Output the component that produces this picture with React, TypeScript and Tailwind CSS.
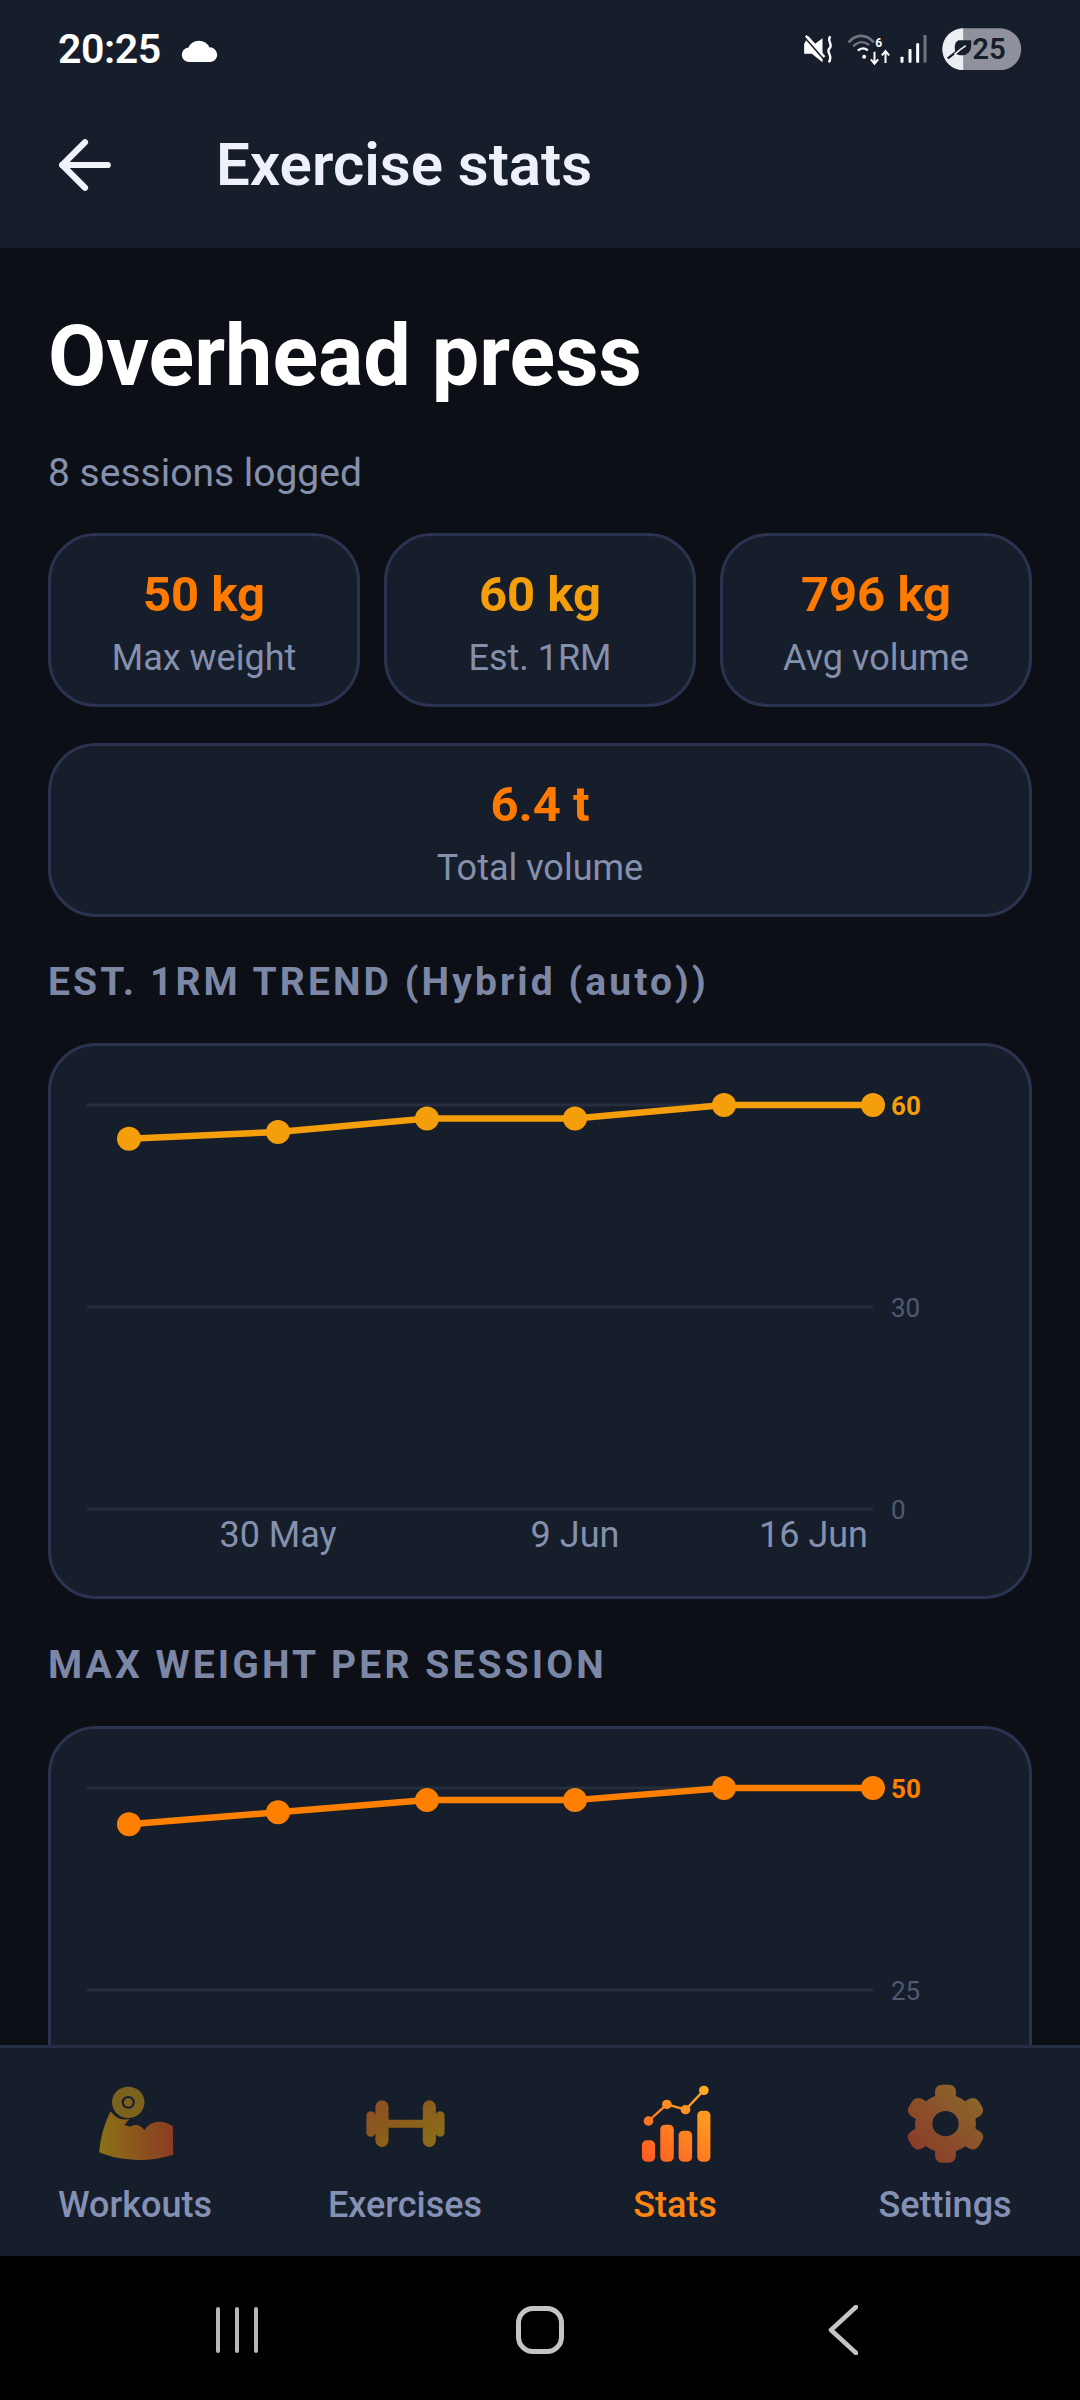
import { ArrowLeft } from "lucide-react";

const font = "font-['Roboto',sans-serif]";

const summary = [
	{ value: "50 kg", label: "Max weight", color: "text-[#ff7a00]" },
	{ value: "60 kg", label: "Est. 1RM", color: "text-[#f59e0b]" },
	{ value: "796 kg", label: "Avg volume", color: "text-[#ff7a00]" },
];

const pointsX = [81, 230, 379, 527, 676, 825];

type ChartProps = {
	color: string;
	max: number;
	values: number[];
	ticks: string[];
};

// plot area runs from y=62 (max) to y=466 (zero)
function TrendChart({ color, max, values, ticks }: ChartProps) {
	const toY = (v: number) => 466 - (v / max) * 404;
	const line = values.map((v, i) => `${pointsX[i]},${toY(v)}`).join(" ");

	return (
		<div className="h-[556px] rounded-[48px] border-[3px] border-[#2b3350] bg-[#171e2b] shrink-0">
			<svg viewBox="3 3 978 550" className="w-full h-full">
				{[62, 264, 466].map((y) => (
					<line key={y} x1="39" x2="825" y1={y} y2={y} stroke="#252d3e" strokeWidth="3" />
				))}
				<polyline points={line} fill="none" stroke={color} strokeWidth="6.5" />
				{values.map((v, i) => (
					<circle key={i} cx={pointsX[i]} cy={toY(v)} r="12" fill={color} />
				))}
				<text x="843" y="72" fontSize="26" fontWeight="700" fill={color} fontFamily="Roboto, sans-serif">
					{ticks[0]}
				</text>
				<text x="843" y="274" fontSize="26" fill="#4f5a73" fontFamily="Roboto, sans-serif">
					{ticks[1]}
				</text>
				<text x="843" y="476" fontSize="26" fill="#4f5a73" fontFamily="Roboto, sans-serif">
					{ticks[2]}
				</text>
				<text x="230" y="504" fontSize="36" textAnchor="middle" fill="#8590ad" fontFamily="Roboto, sans-serif">
					30 May
				</text>
				<text x="527" y="504" fontSize="36" textAnchor="middle" fill="#8590ad" fontFamily="Roboto, sans-serif">
					9 Jun
				</text>
				<text x="820" y="504" fontSize="36" textAnchor="end" fill="#8590ad" fontFamily="Roboto, sans-serif">
					16 Jun
				</text>
			</svg>
		</div>
	);
}

function StatusIcons() {
	return (
		<svg viewBox="120 50 680 150" className="w-[227px] h-[50px]" fill="none">
			{/* muted speaker + vibrate wave */}
			<path d="M135 106 L135 136 L158 136 L190 162 L190 90 L168 106 L148 84 Z" fill="#fff" />
			<path d="M134 84 L192 150" stroke="#171e2b" strokeWidth="5" />
			<path d="M140 82 L196 146" stroke="#fff" strokeWidth="7" />
			<path d="M214 84 C200 98 224 106 211 120 C198 132 224 140 209 162" stroke="#fff" strokeWidth="7" />
			{/* wifi */}
			<path d="M268 102 C290 76 322 76 344 102" stroke="#6f7480" strokeWidth="8" />
			<path d="M282 114 C298 98 314 98 330 110" stroke="#6f7480" strokeWidth="7" />
			<path d="M296 127 C306 118 316 118 326 126" stroke="#fff" strokeWidth="7" />
			<circle cx="315" cy="145" r="6" fill="#fff" />
			<text x="348" y="115" fontSize="36" fontWeight="700" fill="#fff" fontFamily="Roboto, sans-serif">
				6
			</text>
			<path d="M346 130 V164 M335 153 L346 166 L357 153 M379 164 V130 M368 141 L379 128 L390 141" stroke="#fff" strokeWidth="6" />
			{/* signal bars, the tallest one dimmed */}
			<rect x="424" y="145" width="9" height="18" rx="2" fill="#fff" />
			<rect x="448" y="122" width="9" height="41" rx="2" fill="#fff" />
			<rect x="471" y="105" width="9" height="58" rx="2" fill="#fff" />
			<rect x="493" y="80" width="9" height="83" rx="2" fill="#6f7480" />
			{/* battery pill with saver leaf */}
			<rect x="550" y="60" width="236" height="125" rx="62" fill="#8f929c" />
			<path d="M612 60 V185 A62 62 0 0 1 612 60 Z" fill="#eceef2" />
			<path d="M598 96 H636 V112 C636 136 612 148 590 136 C584 118 586 102 598 96 Z" fill="#171e2b" />
			<path d="M566 150 C584 136 600 124 618 110" stroke="#171e2b" strokeWidth="7" />
			<path d="M586 138 C598 128 608 120 620 112" stroke="#eceef2" strokeWidth="5" />
			<text x="639" y="152" fontSize="88" fontWeight="600" fill="#171e2b" fontFamily="Roboto, sans-serif">
				25
			</text>
		</svg>
	);
}

function WorkoutsIcon() {
	return (
		<svg viewBox="270 160 240 240" preserveAspectRatio="none" className="w-[83px] h-[80px] opacity-50">
			<defs>
				<linearGradient id="arm" x1="0" x2="1" y1="0" y2="0">
					<stop offset="0" stopColor="#ffc400" />
					<stop offset="1" stopColor="#ff5a1f" />
				</linearGradient>
			</defs>
			<circle cx="369" cy="218" r="47" fill="#e0a514" />
			<circle cx="369" cy="218" r="16" fill="none" stroke="#171e2b" strokeWidth="6" />
			<path
				d="M318 245 C335 268 350 272 372 268 L358 286 L375 291 C392 282 402 286 416 301 C432 276 462 266 498 290 L499 375 C430 398 350 396 285 368 C288 326 300 282 318 245 Z"
				fill="url(#arm)"
			/>
		</svg>
	);
}

function ExercisesIcon() {
	return (
		<svg viewBox="1055 160 240 240" preserveAspectRatio="none" className="w-[83px] h-[80px] opacity-50">
			<defs>
				<linearGradient id="bell" x1="0" x2="1" y1="0" y2="1">
					<stop offset="0" stopColor="#ff7a1f" />
					<stop offset="1" stopColor="#ffc400" />
				</linearGradient>
			</defs>
			<path
				fill="url(#bell)"
				d="M1125 270 H1225 V294 H1125 Z M1088 232 a19 20 0 0 1 38 0 V332 a19 20 0 0 1 -38 0 Z M1225 232 a19 20 0 0 1 38 0 V332 a19 20 0 0 1 -38 0 Z M1062 258 a13 13 0 0 1 26 0 V308 a13 13 0 0 1 -26 0 Z M1262 258 a13 13 0 0 1 26 0 V308 a13 13 0 0 1 -26 0 Z"
			/>
		</svg>
	);
}

function StatsIcon() {
	return (
		<svg viewBox="270 160 240 240" preserveAspectRatio="none" className="w-[83px] h-[80px]">
			<defs>
				<linearGradient id="stats" gradientUnits="userSpaceOnUse" x1="290" y1="400" x2="490" y2="170">
					<stop offset="0" stopColor="#ff5722" />
					<stop offset="1" stopColor="#ffb020" />
				</linearGradient>
			</defs>
			<rect x="293" y="332" width="38" height="64" rx="14" fill="url(#stats)" />
			<rect x="346" y="285" width="39" height="111" rx="14" fill="url(#stats)" />
			<rect x="399" y="303" width="39" height="93" rx="14" fill="url(#stats)" />
			<rect x="453" y="243" width="38" height="153" rx="14" fill="url(#stats)" />
			<polyline points="312,274 365,224 419,240 472,182" fill="none" stroke="url(#stats)" strokeWidth="7" />
			<circle cx="312" cy="274" r="14" fill="url(#stats)" />
			<circle cx="365" cy="224" r="14" fill="url(#stats)" />
			<circle cx="419" cy="240" r="14" fill="url(#stats)" />
			<circle cx="472" cy="182" r="14" fill="url(#stats)" />
		</svg>
	);
}

function SettingsIcon() {
	const angles = [0, 60, 120, 180, 240, 300];
	return (
		<svg viewBox="1056 160 240 240" preserveAspectRatio="none" className="w-[83px] h-[80px] opacity-50">
			<defs>
				<linearGradient id="gear" x1="0" x2="1" y1="1" y2="0">
					<stop offset="0" stopColor="#ff4a2a" />
					<stop offset="1" stopColor="#ffc02a" />
				</linearGradient>
				<mask id="gear-shape" maskUnits="userSpaceOnUse" x="1056" y="160" width="240" height="240">
					<circle cx="1176" cy="282" r="88" fill="#fff" />
					{angles.map((a) => (
						<rect key={a} x="1146" y="165" width="60" height="60" rx="20" fill="#fff" transform={`rotate(${a} 1176 282)`} />
					))}
					<circle cx="1176" cy="282" r="38" fill="#000" />
				</mask>
			</defs>
			<rect x="1056" y="160" width="240" height="240" fill="url(#gear)" mask="url(#gear-shape)" />
		</svg>
	);
}

const tabs = [
	{ label: "Workouts", icon: <WorkoutsIcon />, active: false },
	{ label: "Exercises", icon: <ExercisesIcon />, active: false },
	{ label: "Stats", icon: <StatsIcon />, active: true },
	{ label: "Settings", icon: <SettingsIcon />, active: false },
];

export default function App() {
	return (
		<div className={`${font} w-[1080px] h-[2400px] flex flex-col overflow-hidden bg-black`}>
			{/* Status bar + toolbar */}
			<header className="h-[248px] shrink-0 bg-[#171e2b] px-[58px]">
				<div className="h-[100px] flex items-center justify-between">
					<div className="flex items-center gap-[20px]">
						<span className="text-[41px] font-semibold text-white tracking-[-0.4px]">20:25</span>
						<svg viewBox="0 0 36 24" className="w-[38px] h-[25px]" fill="#fff">
							<path d="M8 23 a7 7 0 0 1 -1 -14 a11 11 0 0 1 20 0 a7 7 0 0 1 1 14 Z" />
						</svg>
					</div>
					<div className="mr-[-4px]">
						<StatusIcons />
					</div>
				</div>
				<div className="flex items-center h-[130px]">
					<ArrowLeft className="w-[78px] h-[78px] text-[#f1f3fb] ml-[-12px]" strokeWidth={1.9} />
					<h1 className="ml-[92px] text-[60px] font-semibold text-[#eef0fa]">Exercise stats</h1>
				</div>
			</header>

			<main className="flex-1 min-h-0 overflow-hidden bg-[#0c0f16] px-[48px] flex flex-col">
				<h2 className="mt-[62px] text-[84.5px] leading-[94px] font-bold text-white">Overhead press</h2>
				<p className="mt-[46px] text-[39px] leading-[46px] text-[#8590ad]">8 sessions logged</p>

				<div className="mt-[37px] grid grid-cols-3 gap-[24px]">
					{summary.map((s) => (
						<div
							key={s.label}
							className="h-[174px] pt-[8px] rounded-[48px] border-[3px] border-[#2b3350] bg-[#171e2b] flex flex-col items-center justify-center"
						>
							<span className={`text-[49px] leading-[54px] font-bold ${s.color}`}>{s.value}</span>
							<span className="mt-[14px] text-[36px] leading-[44px] text-[#8590ad]">{s.label}</span>
						</div>
					))}
				</div>

				<div className="mt-[36px] h-[174px] pt-[8px] shrink-0 rounded-[48px] border-[3px] border-[#2b3350] bg-[#171e2b] flex flex-col items-center justify-center">
					<span className="text-[49px] leading-[54px] font-bold text-[#ff7a00]">6.4 t</span>
					<span className="mt-[14px] text-[36px] leading-[44px] text-[#8590ad]">Total volume</span>
				</div>

				<h3 className="mt-[44px] mb-[40px] text-[39px] leading-[42px] font-bold tracking-[3.1px] text-[#7c87a6]">
					EST. 1RM TREND (Hybrid (auto))
				</h3>
				<TrendChart color="#f59e0b" max={60} values={[55, 56, 58, 58, 60, 60]} ticks={["60", "30", "0"]} />

				<h3 className="mt-[45px] mb-[40px] text-[39px] leading-[42px] font-bold tracking-[3.1px] text-[#7c87a6]">
					MAX WEIGHT PER SESSION
				</h3>
				<TrendChart color="#ff8000" max={50} values={[45.5, 47, 48.5, 48.5, 50, 50]} ticks={["50", "25", "0"]} />
			</main>

			{/* Bottom tabs */}
			<nav className="h-[211px] shrink-0 grid grid-cols-4 border-t-[3px] border-[#262e45] bg-[#171e2b]">
				{tabs.map((t) => (
					<div key={t.label} className="flex flex-col items-center pt-[35px]">
						{t.icon}
						<span className={`mt-[18px] text-[36px] leading-[48px] font-medium ${t.active ? "text-[#ff8412]" : "text-[#8590b5]"}`}>
							{t.label}
						</span>
					</div>
				))}
			</nav>

			{/* Android navigation bar */}
			<div className="h-[144px] pt-[3px] shrink-0 bg-black grid grid-cols-3 px-[85px] items-center">
				<div className="flex justify-center gap-[15px]">
					<span className="w-[4px] h-[46px] rounded-full bg-[#b8b8b8]" />
					<span className="w-[4px] h-[46px] rounded-full bg-[#b8b8b8]" />
					<span className="w-[4px] h-[46px] rounded-full bg-[#b8b8b8]" />
				</div>
				<div className="flex justify-center">
					<span className="w-[48px] h-[48px] rounded-[17px] border-[5px] border-[#c4c4c4]" />
				</div>
				<div className="flex justify-center">
					<svg viewBox="0 0 30 50" className="w-[30px] h-[50px]" fill="none">
						<path d="M28 2 L3 25 L28 48" stroke="#c4c4c4" strokeWidth="4.5" strokeLinecap="round" strokeLinejoin="round" />
					</svg>
				</div>
			</div>
		</div>
	);
}
